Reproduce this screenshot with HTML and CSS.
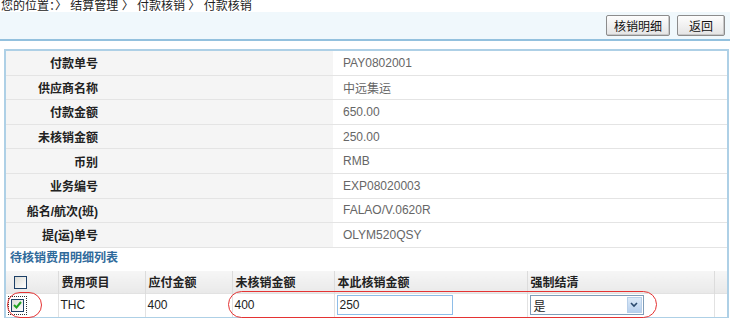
FILE: index.html
```html
<!DOCTYPE html>
<html lang="zh-CN">
<head>
  <meta charset="UTF-8">
  <title>付款核销</title>
  <link rel="stylesheet" href="styles.css">
</head>
<body>

  <div class="crumb">您的位置：〉 结算管理 〉 付款核销 〉 付款核销</div>

  <!-- toolbar -->
  <div class="toolbar">
    <button class="btn btn-wide">核销明细</button>
    <button class="btn">返回</button>
  </div>

  <div class="panel">
    <table class="info">
      <tr><td class="label"><span>付款单号</span></td><td class="value">PAY0802001</td></tr>
      <tr><td class="label"><span>供应商名称</span></td><td class="value">中远集运</td></tr>
      <tr><td class="label"><span>付款金额</span></td><td class="value">650.00</td></tr>
      <tr><td class="label"><span>未核销金额</span></td><td class="value">250.00</td></tr>
      <tr><td class="label"><span>币别</span></td><td class="value">RMB</td></tr>
      <tr><td class="label"><span>业务编号</span></td><td class="value">EXP08020003</td></tr>
      <tr><td class="label"><span>船名/航次(班)</span></td><td class="value">FALAO/V.0620R</td></tr>
      <tr><td class="label"><span>提(运)单号</span></td><td class="value">OLYM520QSY</td></tr>
    </table>

    <div class="list-title">待核销费用明细列表</div>

    <div class="grid-wrap">
      <table class="grid">
        <colgroup>
          <col class="c-check">
          <col class="c-item">
          <col class="c-amt">
          <col class="c-left">
          <col class="c-now">
          <col class="c-force">
          <col>
        </colgroup>
        <thead>
          <tr>
            <th class="th-check"><span class="cb"></span></th>
            <th>费用项目</th>
            <th>应付金额</th>
            <th>未核销金额</th>
            <th>本此核销金额</th>
            <th>强制结清</th>
            <th></th>
          </tr>
        </thead>
        <tbody>
          <tr>
            <td class="td-check"><span class="focus"><span class="cb cb-on">
              <svg width="9" height="8" viewBox="0 0 9 8"><path d="M1 4 L3.5 6.5 L8 1" fill="none" stroke="#21a121" stroke-width="2"/></svg>
            </span></span></td>
            <td>THC</td>
            <td>400</td>
            <td>400</td>
            <td><span class="input">250</span></td>
            <td>
              <span class="select">是<span class="arrow">
                <svg width="8" height="6" viewBox="0 0 8 6"><path d="M1 1 L4 4 L7 1" fill="none" stroke="#2b4a6e" stroke-width="1.6"/></svg>
              </span></span>
            </td>
            <td></td>
          </tr>
        </tbody>
      </table>
      <!-- red annotation marks -->
      <div class="mark mark-check"></div>
      <div class="mark mark-row"></div>
    </div>
  </div>

</body>
</html>
```

FILE: styles.css
```css
body {
  margin: 0;
  font-family: "Liberation Sans", "Noto Sans CJK SC", sans-serif;
  font-size: 12px;
  color: #222;
  background: #fff;
}
.crumb {
  height: 12px;
  line-height: 12px;
  padding-left: 1px;
  color: #222;
  overflow: hidden;
}
.toolbar {
  height: 27px;
  background: #f0f8fc;
  border-bottom: 2px solid #93c1de;
  display: flex;
  justify-content: flex-end;
  align-items: center;
  gap: 7px;
  padding-right: 5px;
}
.btn {
  height: 21px;
  width: 48px;
  padding: 0;
  font-family: inherit;
  font-size: 12px;
  color: #111;
  background: linear-gradient(#fdfdfd, #e4e4e4);
  border: 1px solid #8c8c8c;
  border-radius: 2px;
  box-shadow: inset -1px -1px 0 #c8c8c8;
}
.btn-wide {
  width: 64px;
}
.panel {
  margin: 8px 1px 0 4px;
  border: 2px solid #aed0e6;
  border-bottom-width: 1px;
}
.info {
  width: 100%;
  border-collapse: collapse;
}
.info td {
  height: 23.6px;
  padding: 0;
  border-bottom: 1px solid #e4e4e4;
}
.label {
  width: 327px;
  background: #f5f5f5;
  font-weight: bold;
  color: #222;
}
.label span {
  display: inline-block;
  width: 92px;
  text-align: right;
}
.value {
  padding-left: 10px !important;
  color: #666;
  background: #fff;
}
.list-title {
  height: 23px;
  line-height: 21px;
  padding-left: 4px;
  font-weight: bold;
  color: #2f6a9b;
}
.grid-wrap {
  position: relative;
}
.grid {
  width: 100%;
  border-collapse: collapse;
  table-layout: fixed;
}
.c-check { width: 52px; }
.c-item { width: 87px; }
.c-amt { width: 87px; }
.c-left { width: 102px; }
.c-now { width: 193px; }
.c-force { width: 187px; }
.grid th {
  height: 22px;
  padding: 0 0 0 3px;
  text-align: left;
  font-weight: bold;
  color: #222;
  background: linear-gradient(#f6f6f6, #e9e9e9);
  border-right: 1px solid #dcdcdc;
  overflow: hidden;
  white-space: nowrap;
}
.grid td {
  height: 23px;
  padding: 0 0 0 2px;
  border-right: 1px solid #e2e2e2;
  border-top: 1px solid #e2e2e2;
  white-space: nowrap;
}
.grid th:last-child, .grid td:last-child {
  border-right: none;
}
.grid th.th-check {
  padding-left: 8px;
}
.grid td.td-check {
  padding-left: 2px;
}
.cb {
  display: inline-block;
  width: 11px;
  height: 11px;
  border: 1px solid #1c3f66;
  background: linear-gradient(135deg, #dcdcd6, #fff);
  vertical-align: middle;
}
.cb-on {
  position: relative;
}
.cb-on svg {
  position: absolute;
  left: 1px;
  top: 1px;
}
.focus {
  display: inline-block;
  padding: 2px;
  border: 1px dotted #333;
  line-height: 0;
}
.input {
  display: inline-block;
  width: 112px;
  height: 18px;
  line-height: 18px;
  padding-left: 2px;
  border: 1px solid #8ebde8;
  color: #222;
}
.select {
  display: inline-flex;
  align-items: center;
  justify-content: space-between;
  width: 109px;
  height: 18px;
  padding-left: 3px;
  border: 1px solid #7f9db9;
  color: #222;
}
.arrow {
  width: 15px;
  height: 16px;
  margin-right: 1px;
  display: flex;
  align-items: center;
  justify-content: center;
  background: linear-gradient(#dceaf8, #b7d0ee);
  border: 1px solid #b8cfe9;
  box-sizing: border-box;
}
.mark {
  position: absolute;
  border: 1px solid #e53333;
  border-radius: 14px;
}
.mark-check {
  left: 1px;
  top: 21px;
  width: 33px;
  height: 24px;
}
.mark-row {
  left: 222px;
  top: 20px;
  width: 427px;
  height: 25px;
}
```
